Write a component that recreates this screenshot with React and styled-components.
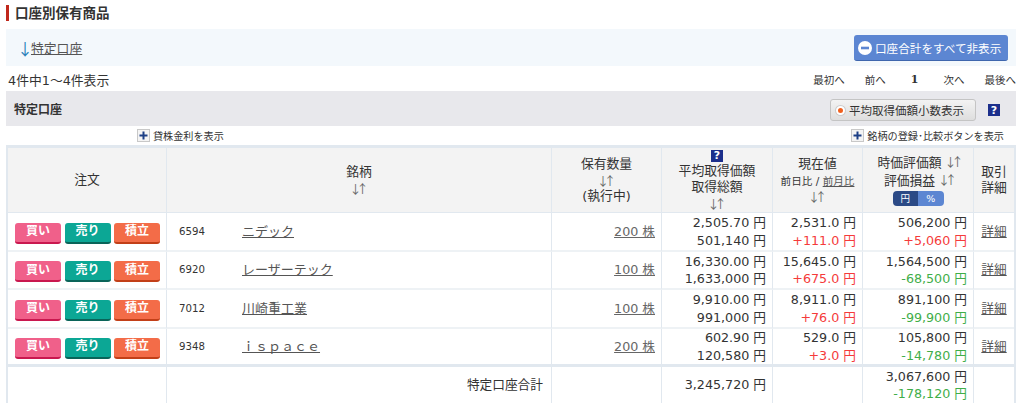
import styled, { createGlobalStyle } from 'styled-components';

const GlobalStyle = createGlobalStyle`
  html, body {
    margin: 0;
    padding: 0;
    overflow: hidden;
    background: #fff;
  }
  body {
    font-family: "DejaVu Sans", "Noto Sans CJK JP", sans-serif;
    font-size: 13px;
    color: #333;
  }
`;

const Page = styled.div`
  width: 1024px;
  height: 403px;
  overflow: hidden;
  padding: 5px 0 0 6px;
  box-sizing: border-box;
`;

const Title = styled.h2`
  margin: 0;
  height: 16px;
  line-height: 16px;
  padding-left: 6px;
  border-left: 3px solid #c0281c;
  font-size: 13.5px;
  font-weight: bold;
  color: #333;
`;

const Banner = styled.div`
  margin-top: 8px;
  height: 37px;
  width: 1010px;
  padding: 0 8px 0 11px;
  box-sizing: border-box;
  display: flex;
  align-items: center;
  justify-content: space-between;
  background: #f3f8fc;
`;

const JumpLink = styled.div`
  display: flex;
  align-items: center;
  font-size: 12.8px;
`;

const JumpArrow = styled.span`
  width: 14px;
  text-align: center;
  color: #2a80b9;
  font-family: "Noto Sans CJK JP", sans-serif;
  font-size: 16px;
`;

const Link = styled.a`
  color: ${(p) => p.$color || '#555'};
  text-decoration: underline;
  cursor: pointer;
`;

const HideButton = styled.button`
  width: 154px;
  height: 26px;
  margin-top: 1px;
  padding: 0 0 0 4px;
  display: flex;
  align-items: center;
  gap: 3px;
  border: 0;
  border-bottom: 1px solid #3f66ad;
  border-radius: 3px;
  background: #5c86d2;
  color: #fff;
  font-family: inherit;
  font-size: 11.6px;
  white-space: nowrap;
`;

const PagerRow = styled.div`
  height: 25px;
  width: 1010px;
  padding-top: 2px;
  box-sizing: border-box;
  display: flex;
  align-items: center;
  justify-content: space-between;
`;

const Count = styled.span`
  padding-left: 2px;
  font-size: 12.8px;
`;

const Pager = styled.div`
  display: flex;
  align-items: center;
  gap: 20px;
  font-size: 10.5px;
`;

const PagerNum = styled.b`
  margin: 0 5px;
  font-family: "DejaVu Serif", serif;
  font-size: 11px;
`;

const AccountBar = styled.div`
  height: 35px;
  width: 1010px;
  padding: 3px 16px 0 8px;
  box-sizing: border-box;
  display: flex;
  align-items: center;
  background: #e8e8ec;
`;

const AccountName = styled.b`
  flex: 1;
  margin-top: -3px;
  font-size: 12px;
`;

const DecimalButton = styled.div`
  width: 146px;
  height: 22px;
  margin-right: 12px;
  display: flex;
  align-items: center;
  gap: 4px;
  padding-left: 5px;
  box-sizing: border-box;
  border: 1px solid #c4c4c4;
  border-radius: 3px;
  background: linear-gradient(#f3f3f3, #dedede);
  font-size: 11.5px;
  white-space: nowrap;
`;

const Radio = styled.span`
  width: 5px;
  height: 5px;
  border-radius: 50%;
  background: #f0601e;
  border: 2px solid #fff;
  box-shadow: 0 0 0 1px #ccc;
`;

const HelpIcon = styled.span`
  width: 12px;
  height: 12px;
  display: flex;
  align-items: center;
  justify-content: center;
  margin: ${(p) => (p.$center ? '0 auto 1px' : '0')};
  background: #1c2f8c;
  color: #fff;
  font-size: 11px;
  font-weight: bold;
  line-height: 1;
`;

const OptionRow = styled.div`
  height: 19px;
  width: 998px;
  padding-left: 131px;
  box-sizing: border-box;
  display: flex;
  align-items: center;
  justify-content: space-between;
`;

const OptionToggle = styled.div`
  display: flex;
  align-items: center;
  gap: 3px;
  font-size: 10.15px;
  white-space: nowrap;
`;

const Table = styled.table`
  width: 1010px;
  table-layout: fixed;
  border-collapse: separate;
  border-spacing: 0;
  border: 2px solid #e1e8ef;
  border-top-width: 3px;
  border-bottom: 0;
`;

const Th = styled.th`
  height: 65px;
  padding: 0;
  box-sizing: border-box;
  background: #f3f3f3;
  font-size: 12.8px;
  font-weight: normal;
  line-height: 16.5px;
  text-align: center;
  vertical-align: middle;
  border-left: ${(p) => (p.$first ? '0' : '1px solid #e1e8ef')};
  border-bottom: 1px solid #e1e8ef;
`;

const Td = styled.td`
  height: ${(p) => p.$h || 38}px;
  padding: 0 ${(p) => p.$pad ?? 6}px 0 ${(p) => p.$padLeft ?? 0}px;
  box-sizing: border-box;
  font-size: 12.7px;
  line-height: 17.4px;
  text-align: ${(p) => p.$align || 'right'};
  white-space: nowrap;
  border-left: ${(p) => (p.$first ? '0' : '1px solid #e1e8ef')};
  border-bottom: ${(p) => (p.$last ? '3px' : '2px')} solid ${(p) => (p.$last ? '#e1e8ef' : '#eef2f5')};
`;

const SumCell = styled(Td)`
  border-bottom: 0;
`;

const Buttons = styled.div`
  display: flex;
  gap: 3.5px;
  padding-top: 3px;
`;

const Order = styled.span`
  width: 46px;
  height: 21px;
  box-sizing: border-box;
  display: flex;
  align-items: center;
  justify-content: center;
  border-radius: 3px;
  border-bottom: 2px solid ${(p) => p.$edge};
  background: ${(p) => p.$bg};
  color: #fff;
  font-size: 12px;
  font-weight: bold;
`;

const StockName = styled.div`
  display: flex;
  align-items: center;
  font-size: 13px;
`;

const Code = styled.span`
  width: 63px;
  color: #333;
  font-size: 10.2px;
`;

const Sort = styled.div`
  color: #666;
  font-family: "Noto Sans CJK JP", sans-serif;
  font-size: 12px;
  line-height: 15px;
  letter-spacing: -5px;
  padding-right: 5px;
`;

const InlineSort = styled.span`
  color: #666;
  font-family: "Noto Sans CJK JP", sans-serif;
  font-size: 12px;
  letter-spacing: -5px;
  margin-left: 3px;
`;

const Small = styled.div`
  font-size: 10.6px;
`;

const Amount = styled.div`
  color: ${(p) => p.$color || '#333'};
`;

const RateToggle = styled.div`
  display: flex;
  width: 51px;
  height: 15px;
  margin: 2px auto 0;
  border-radius: 4px;
  overflow: hidden;
  font-size: 9.5px;
  line-height: 15px;
  color: #fff;
`;

const RateItem = styled.span`
  flex: 1;
  background: ${(p) => (p.$active ? '#2b4a86' : '#5c86d2')};
`;

const RED = '#f53a3a';
const GREEN = '#3fae49';

const ORDER_BUTTONS = [
  { label: '買い', bg: '#f0608a', edge: '#c9184f' },
  { label: '売り', bg: '#0ca795', edge: '#0a6459' },
  { label: '積立', bg: '#f36c48', edge: '#c23f18' },
];

const ROWS = [
  { code: '6594', name: 'ニデック', qty: '200 株', avg: '2,505.70 円', cost: '501,140 円', price: '2,531.0 円', diff: '+111.0 円', value: '506,200 円', pl: '+5,060 円', up: true, h: 39 },
  { code: '6920', name: 'レーザーテック', qty: '100 株', avg: '16,330.00 円', cost: '1,633,000 円', price: '15,645.0 円', diff: '+675.0 円', value: '1,564,500 円', pl: '-68,500 円', h: 38 },
  { code: '7012', name: '川崎重工業', qty: '100 株', avg: '9,910.00 円', cost: '991,000 円', price: '8,911.0 円', diff: '+76.0 円', value: '891,100 円', pl: '-99,900 円', h: 39 },
  { code: '9348', name: 'ｉｓｐａｃｅ', qty: '200 株', avg: '602.90 円', cost: '120,580 円', price: '529.0 円', diff: '+3.0 円', value: '105,800 円', pl: '-14,780 円', h: 38, last: true },
];

const MinusIcon = () => (
  <svg width="14" height="14" viewBox="0 0 14 14">
    <circle cx="7" cy="7" r="7" fill="#fff" />
    <rect x="3" y="5.7" width="8" height="2.6" fill="#5c86d2" />
  </svg>
);

const PlusIcon = () => (
  <svg width="13" height="13" viewBox="0 0 13 13">
    <rect x="0.5" y="0.5" width="12" height="12" fill="#f4f4f4" stroke="#c8c8c8" />
    <path d="M6.5 2.5v8M2.5 6.5h8" stroke="#1c3f86" strokeWidth="2" />
  </svg>
);

const App = () => {
  return (
    <Page>
      <GlobalStyle />
      <Title>口座別保有商品</Title>
      <Banner>
        <JumpLink>
          <JumpArrow>↓</JumpArrow>
          <Link>特定口座</Link>
        </JumpLink>
        <HideButton>
          <MinusIcon />
          口座合計をすべて非表示
        </HideButton>
      </Banner>
      <PagerRow>
        <Count>4件中1～4件表示</Count>
        <Pager>
          <span>最初へ</span>
          <span>前へ</span>
          <PagerNum>1</PagerNum>
          <span>次へ</span>
          <span>最後へ</span>
        </Pager>
      </PagerRow>
      <AccountBar>
        <AccountName>特定口座</AccountName>
        <DecimalButton>
          <Radio />
          平均取得価額小数表示
        </DecimalButton>
        <HelpIcon>?</HelpIcon>
      </AccountBar>
      <OptionRow>
        <OptionToggle>
          <PlusIcon />
          貸株金利を表示
        </OptionToggle>
        <OptionToggle>
          <PlusIcon />
          銘柄の登録･比較ボタンを表示
        </OptionToggle>
      </OptionRow>
      <Table>
        <colgroup>
          <col style={{ width: 158 }} />
          <col style={{ width: 385 }} />
          <col style={{ width: 110 }} />
          <col style={{ width: 111 }} />
          <col style={{ width: 90 }} />
          <col style={{ width: 111 }} />
          <col />
        </colgroup>
        <thead>
          <tr>
            <Th $first>注文</Th>
            <Th>
              銘柄
              <Sort>↓↑</Sort>
            </Th>
            <Th>
              保有数量
              <Sort>↓↑</Sort>
              (執行中)
            </Th>
            <Th>
              <HelpIcon $center>?</HelpIcon>
              <div>平均取得価額</div>
              <div>取得総額</div>
              <Sort>↓↑</Sort>
            </Th>
            <Th>
              現在値
              <Small>
                前日比 / <Link>前月比</Link>
              </Small>
              <Sort>↓↑</Sort>
            </Th>
            <Th>
              <div>
                時価評価額<InlineSort>↓↑</InlineSort>
              </div>
              <div>
                評価損益<InlineSort>↓↑</InlineSort>
              </div>
              <RateToggle>
                <RateItem $active>円</RateItem>
                <RateItem>%</RateItem>
              </RateToggle>
            </Th>
            <Th>
              取引
              <br />
              詳細
            </Th>
          </tr>
        </thead>
        <tbody>
          {ROWS.map((row) => (
            <tr key={row.code}>
              <Td $first $h={row.h} $last={row.last} $pad={0} $padLeft={7}>
                <Buttons>
                  {ORDER_BUTTONS.map((b) => (
                    <Order key={b.label} $bg={b.bg} $edge={b.edge}>
                      {b.label}
                    </Order>
                  ))}
                </Buttons>
              </Td>
              <Td $h={row.h} $last={row.last} $align="left" $padLeft={12}>
                <StockName>
                  <Code>{row.code}</Code>
                  <Link>{row.name}</Link>
                </StockName>
              </Td>
              <Td $h={row.h} $last={row.last}>
                <Link $color="#666">{row.qty}</Link>
              </Td>
              <Td $h={row.h} $last={row.last}>
                <Amount>{row.avg}</Amount>
                <Amount>{row.cost}</Amount>
              </Td>
              <Td $h={row.h} $last={row.last}>
                <Amount>{row.price}</Amount>
                <Amount $color={RED}>{row.diff}</Amount>
              </Td>
              <Td $h={row.h} $last={row.last}>
                <Amount>{row.value}</Amount>
                <Amount $color={row.up ? RED : GREEN}>{row.pl}</Amount>
              </Td>
              <Td $h={row.h} $last={row.last} $align="center" $pad={0}>
                <Link>詳細</Link>
              </Td>
            </tr>
          ))}
          <tr>
            <SumCell $first $h={36} />
            <SumCell $h={36} $pad={8}>特定口座合計</SumCell>
            <SumCell $h={36} />
            <SumCell $h={36}>3,245,720 円</SumCell>
            <SumCell $h={36} />
            <SumCell $h={36}>
              <Amount>3,067,600 円</Amount>
              <Amount $color={GREEN}>-178,120 円</Amount>
            </SumCell>
            <SumCell $h={36} />
          </tr>
        </tbody>
      </Table>
    </Page>
  );
};

export default App;
